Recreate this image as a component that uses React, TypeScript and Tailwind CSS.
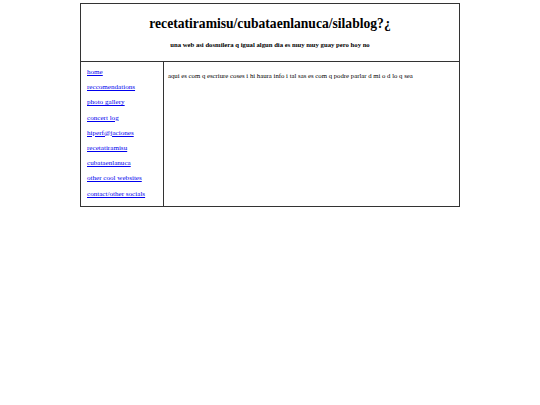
const links = [
  'home',
  'reccomendations',
  'photo gallery',
  'concert log',
  'hiperf@jaciones',
  'recetatiramisu',
  'cubataenlanuca',
  'other cool websites',
  'contact/other socials',
]

export default function App() {
  return (
    <div className="min-h-screen bg-white pt-[3px]" style={{ fontFamily: '"Liberation Serif", "Times New Roman", serif' }}>
      <div className="mx-auto w-[380px] border-[1.5px] border-[#333]">
        {/* Header */}
        <div className="flex h-[58px] flex-col items-center justify-center border-b-[1.5px] border-[#333]">
          <h1 className="mt-[1px] text-[13.6px] font-bold leading-none text-black">recetatiramisu/cubataenlanuca/silablog?¿</h1>
          <p className="mt-[11px] text-[6.7px] font-bold leading-none text-black">
            una web asi dosmilera q igual algun dia es muy muy guay pero hoy no
          </p>
        </div>

        {/* Body */}
        <div className="flex h-[144px]">
          <nav className="flex w-[83px] flex-col gap-[7.6px] border-r-[1.5px] border-[#333] px-[6px] pt-[7px]">
            {links.map((l) => (
              <a key={l} href="#" className="text-[7.1px] leading-[7.6px] text-[#0000ee] underline">
                {l}
              </a>
            ))}
          </nav>
          <div className="flex-1 px-[4px] pt-[11px]">
            <p className="text-[6.75px] leading-none text-black">
              aqui es com q escriure coses i hi haura info i tal sas es com q podre parlar d mi o d lo q sea
            </p>
          </div>
        </div>
      </div>
    </div>
  )
}
